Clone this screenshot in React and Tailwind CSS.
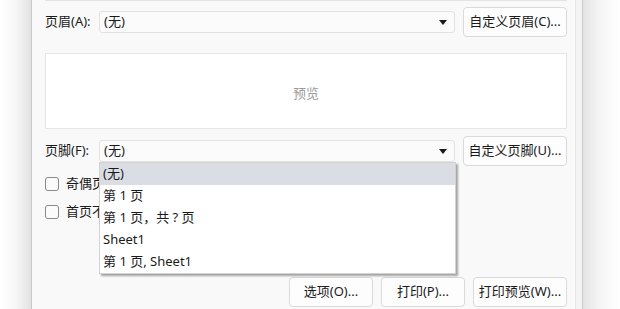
import React from "react";

const font = { fontFamily: '"Noto Sans", "Noto Sans CJK SC", sans-serif' };

function Arrow() {
  return (
    <svg width="8" height="5" viewBox="0 0 8 5" className="shrink-0">
      <path d="M0 0 H8 L4 5 Z" fill="#1a1a1a" />
    </svg>
  );
}

function Select({ children }) {
  return (
    <div className="flex-1 h-[22px] flex items-center justify-between pl-[4px] pr-[7px] rounded-[3px] border border-[#e2e2e2] bg-[#fbfbfb] text-[13px] text-[#1a1a1a]">
      <span>{children}</span>
      <Arrow />
    </div>
  );
}

function Btn({ w, children }) {
  return (
    <div
      className={`${w} h-[30px] flex items-center justify-center rounded-[4px] border border-[#dadada] bg-[#fdfdfd] text-[13px] text-[#1a1a1a] shrink-0 whitespace-nowrap`}
    >
      {children}
    </div>
  );
}

function Check({ label }) {
  return (
    <div className="flex items-center gap-[7px] h-[14px]">
      <div className="w-[14px] h-[14px] rounded-[3px] border border-[#8a8a8a] bg-[#fbfbfb]" />
      <span className="text-[13px] text-[#1a1a1a]">{label}</span>
    </div>
  );
}

export default function App() {
  const items = ["(无)", "第 1 页", "第 1 页，共 ? 页", "Sheet1", "第 1 页, Sheet1"];
  return (
    <div className="w-[620px] h-[309px] flex overflow-hidden bg-white" style={font}>
      <div className="w-[31px] h-full bg-gradient-to-r from-[#ffffff] via-[#f7f7f7] to-[#e2e2e2]" />
      <div className="w-[552px] h-full flex bg-[#f3f3f3] border-l border-r border-[#c9c9c9]">
        <div className="w-[544px] h-full flex flex-col bg-[#f9f9f9] border-r border-[#e6e6e6] pl-[13px] pr-[8px]">
          <div className="h-px bg-[#e4e4e4]" />
          <div className="mt-[6px] h-[30px] flex items-center">
            <span className="w-[54px] text-[13px] text-[#1a1a1a] shrink-0 whitespace-nowrap">页眉(A):</span>
            <Select>(无)</Select>
            <div className="w-[8px] shrink-0" />
            <Btn w="w-[104px]">自定义页眉(C)...</Btn>
          </div>
          <div className="mt-[16px] h-[76px] flex items-center justify-center pt-[6px] bg-white border border-[#e6e6e6] text-[13px] text-[#9b9b9b]">
            预览
          </div>
          <div className="mt-[7px] h-[30px] flex items-center">
            <span className="w-[54px] text-[13px] text-[#1a1a1a] shrink-0 whitespace-nowrap">页脚(F):</span>
            <div className="relative flex-1 flex">
              <Select>(无)</Select>
              <div className="absolute left-0 top-[22px] w-[357px] bg-white border border-[#d2d2d2] shadow-[2px_2px_2px_rgba(0,0,0,0.35)] z-10">
                {items.map((t, i) => (
                  <div
                    key={i}
                    className={`h-[22px] flex items-center pl-[3px] text-[13px] text-[#1a1a1a] ${i === 0 ? "bg-[#dadde3]" : ""}`}
                  >
                    {t}
                  </div>
                ))}
              </div>
            </div>
            <div className="w-[8px] shrink-0" />
            <Btn w="w-[104px]">自定义页脚(U)...</Btn>
          </div>
          <div className="mt-[11px] flex flex-col gap-[14px]">
            <Check label="奇偶页不同(D)" />
            <Check label="首页不同(I)" />
          </div>
          <div className="mt-[58px] flex justify-end gap-[8px]">
            <Btn w="w-[84px]">选项(O)...</Btn>
            <Btn w="w-[84px]">打印(P)...</Btn>
            <Btn w="w-[94px]">打印预览(W)...</Btn>
          </div>
        </div>
      </div>
      <div className="flex-1 h-full bg-gradient-to-r from-[#e4e4e4] via-[#f6f6f6] to-[#ffffff]" />
    </div>
  );
}
